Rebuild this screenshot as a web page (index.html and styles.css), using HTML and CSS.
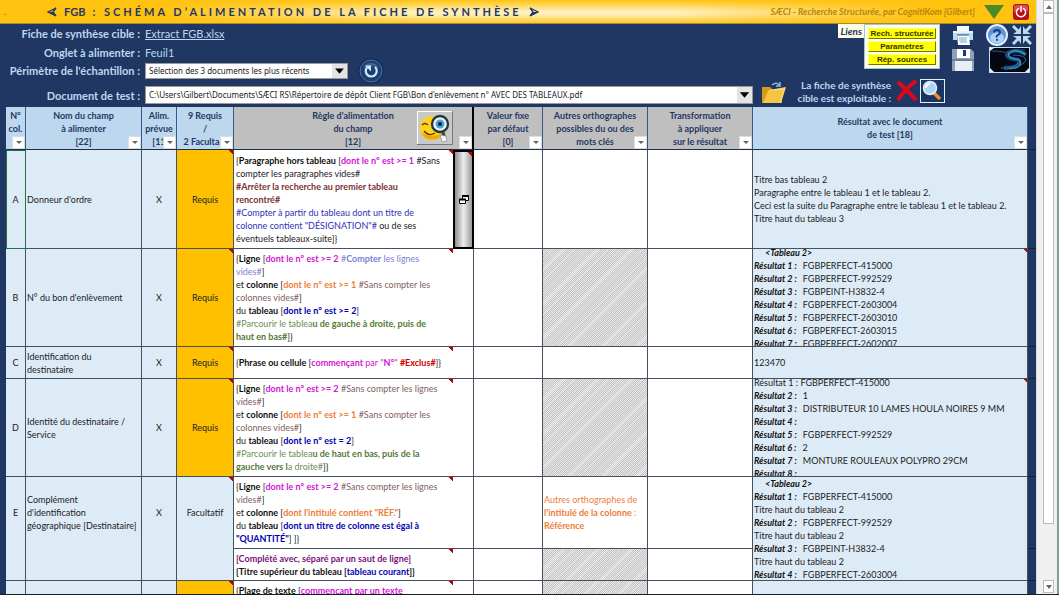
FILE: index.html
```html
<!DOCTYPE html>
<html lang="fr">
<head>
<meta charset="utf-8">
<title>FGB : Schéma d’alimentation de la fiche de synthèse</title>
<link rel="stylesheet" href="styles.css">
</head>
<body>
<div class="window">
<main class="sheet">
  <header class="banner">
    <span class="dot">.</span>
    <h1 class="title">
      <svg class="arrowhead" viewBox="0 0 10 10"><path d="M9 1 1 5l8 4-3-4z" fill="none" stroke="#1f3864" stroke-width="1.3"/><path d="M1 5h5l3 4z" fill="#1f3864"/></svg>
      <span>FGB</span><span class="spaced">: SCHÉMA D’ALIMENTATION DE LA FICHE DE SYNTHÈSE</span>
      <svg class="arrowhead" viewBox="0 0 10 10"><path d="M1 1 9 5 1 9l3-4z" fill="none" stroke="#1f3864" stroke-width="1.3"/><path d="M9 5H4L1 9z" fill="#1f3864"/></svg>
    </h1>
    <span class="credit">SÆCI - Recherche Structurée, par CognitiKom [Gilbert]</span>
    <button class="icon-btn" aria-label="Dérouler"><svg width="20" height="14" viewBox="0 0 20 14"><path d="M0 0h20L10 14z" fill="#4a8a2a"/></svg></button>
    <button class="icon-btn" aria-label="Quitter"><svg width="16" height="16" viewBox="0 0 16 16"><rect width="16" height="16" rx="3" fill="#b80f18"/><path d="M1 8V3q0-2 2-2h10q2 0 2 2v4q-7-2-14 1z" fill="#dc4b50"/><path d="M5.3 4.5a4.6 4.6 0 1 0 5.4 0M8 2.5v5" fill="none" stroke="#fff" stroke-width="1.5" stroke-linecap="round"/></svg></button>
  </header>

  <section class="top">
    <div class="fields">
      <span class="label">Fiche de synthèse cible :</span><a class="value" href="#">Extract FGB.xlsx</a>
      <span class="label">Onglet à alimenter :</span><span class="value">Feuil1</span>
      <label class="label" for="scope">Périmètre de l'échantillon :</label>
      <div class="scope">
        <span class="combo"><select id="scope"><option>Sélection des 3 documents les plus récents</option></select><svg class="combo-arrow" viewBox="0 0 16 16"><path d="M3 5h10l-5 6z"/></svg></span>
        <button class="icon-btn" aria-label="Actualiser"><svg width="26" height="26" viewBox="0 0 26 26"><circle cx="13" cy="13" r="12.5" fill="#12294f"/><circle cx="13" cy="13" r="11" fill="#1d3f73" stroke="#4f74a8"/><path d="M5 10a9 9 0 0 1 16 0q-8-4-16 0z" fill="#41639a"/><path d="M9 9.500a5.500 5.500 0 1 0 8-.5" fill="none" stroke="#d7e9fb" stroke-width="2.2"/><path d="M7 7.500h6v6z" fill="#d7e9fb"/></svg></button>
      </div>
    </div>
    <div class="links">
      <span class="links-title">Liens</span>
      <div class="links-box"><button>Rech. structurée</button><button>Paramètres</button><button>Rép. sources</button></div>
    </div>
    <div class="tools">
      <button class="icon-btn" aria-label="Imprimer"><svg width="22" height="21" viewBox="0 0 22 21"><path d="M5 1h12v5H5z" fill="#f6fbff"/><path d="M1 6h20v9h-4v-4H5v4H1z" fill="#b6dcf2"/><path d="M1 6h20v2H1z" fill="#e6f5fd"/><path d="M5 10h12l1 10H6z" fill="#f8fcff"/><path d="M7 13h8M7 15h8M8 17h7" stroke="#7fa6c4"/><path d="M5 10h12" stroke="#27456e"/></svg></button>
      <button class="icon-btn" aria-label="Aide"><svg width="22" height="22" viewBox="0 0 22 22"><circle cx="11" cy="11" r="10" fill="#5b93dd" stroke="#e8f1fb" stroke-width="2"/><ellipse cx="11" cy="14" rx="7" ry="5.5" fill="#a9d0f6"/><path d="M8 8.5Q8 6 11 6t3 2.500Q14 10 12 11t-1 2.500M11 15v1.800" fill="none" stroke="#1d3e7c" stroke-width="1.900"/></svg></button>
      <button class="icon-btn" aria-label="Réduire"><svg width="20" height="20" viewBox="0 0 20 20"><path d="M1 1l6 6M19 1l-6 6M1 19l6-6M19 19l-6-6" fill="none" stroke="#b9dcf3" stroke-width="3"/><path d="M9 1v8H1l3-2 3-3zM11 1v8h8l-3-2-3-3zM9 19v-8H1l3 2 3 3zM11 19v-8h8l-3 2-3 3z" fill="#b9dcf3"/></svg></button>
      <button class="icon-btn" aria-label="Enregistrer"><svg width="22" height="24" viewBox="0 0 22 24"><path d="M0 1h19l3 3v19H0z" fill="#8fa1ba"/><path d="M5 1h13v9H5z" fill="#fff"/><path d="M11 2h3v6h-3z" fill="#1f3864"/><path d="M0 11h22v2H0z" fill="#6a80a0"/><path d="M3 13h17v10H3z" fill="#e9eef3"/></svg></button>
      <button class="icon-btn logo" aria-label="SÆCI"><svg width="41" height="26" viewBox="0 0 41 26"><rect x=".5" y=".5" width="40" height="25" fill="#04070f" stroke="#c9dcee"/><path d="M1 1h4L1 4zM1 21l4 4H1zM40 21v4h-4z" fill="#e8f2fa"/><path d="M3 4q12 0 18 3 6-5 15-4" fill="none" stroke="#1d5c8f"/><path d="M37 8q-6-5-12-4-7 1-7 4t7 4 5 5-15 4" fill="none" stroke="#164f83" stroke-width="4"/><path d="M36 7q-6-4-12-3-6 2-4 5t7 3 4 5-11 4" fill="none" stroke="#4aa6d8" stroke-width="1.200"/><path d="M12 21q12 1 17-5M24 8q12 0 13 5-3 6-14 8" fill="none" stroke="#1f74ae"/></svg></button>
    </div>
  </section>

  <section class="doc">
    <label class="label" for="doc">Document de test :</label>
    <span class="combo"><select id="doc"><option>C:\Users\Gilbert\Documents\SÆCI RS\Répertoire de dépôt Client FGB\Bon d'enlèvement n° AVEC DES TABLEAUX.pdf</option></select><svg class="combo-arrow" viewBox="0 0 16 16"><path d="M3 5h10l-5 6z"/></svg></span>
    <button class="icon-btn" aria-label="Ouvrir"><svg width="28" height="26" viewBox="0 0 28 26"><path d="M2 8h8l2 2h10v14H2z" fill="#d49a1c"/><path d="M4 24 9 11l17-3-5 16z" fill="#fbd766"/><path d="M3 24 8 12l15-1-4 13z" fill="#f5c443"/><path d="M12 6q5-4 8 1m0-4v4h-4" fill="none" stroke="#8db4d8" stroke-width="1.500"/></svg></button>
    <p class="status">La fiche de synthèse<br>cible est exploitable :</p>
    <svg class="cross" width="22" height="22" viewBox="0 0 22 22"><path d="M2 2q9 8 18 18M20 1Q9 9 2 20" fill="none" stroke="#e3061a" stroke-width="4"/></svg>
    <button class="icon-btn" aria-label="Rechercher"><svg width="25" height="24" viewBox="0 0 25 24"><rect x=".5" y=".5" width="24" height="23" fill="#1b3563" stroke="#e6eef6"/><path d="m14 14 6 6" stroke="#f08a2c" stroke-width="3.500"/><circle cx="10" cy="9" r="6.500" fill="#a9d3f3" stroke="#e4f0fa" stroke-width="1.500"/><path d="M6 9q0-4 4-4" fill="none" stroke="#fff" stroke-width="2"/></svg></button>
  </section>

  <div class="grid-area">
  <table class="grid">
    <colgroup><col class="c-num"><col class="c-name"><col class="c-alim"><col class="c-req"><col class="c-rule"><col class="c-open"><col class="c-val"><col class="c-alt"><col class="c-alt"><col><col class="c-edge"></colgroup>
    <thead>
      <tr>
        <th>N°<br>col.<br>&nbsp;<button class="filter" aria-label="Filtrer"></button></th>
        <th>Nom du champ<br>à alimenter<br>[22]<button class="filter" aria-label="Filtrer"></button></th>
        <th>Alim.<br>prévue<br>[11<button class="filter" aria-label="Filtrer"></button></th>
        <th>9 Requis<br>/<br><span class="cut">2 Faculta</span><button class="filter" aria-label="Filtrer"></button></th>
        <th class="grey rule-head" colspan="2">Règle d'alimentation<br>du champ<br>[12]
          <button class="icon-btn smiley" aria-label="Examiner"><svg width="36" height="34" viewBox="0 0 36 34"><path d="M0 0h36v34H0z" fill="#c9c9c9"/><path d="M0 34V0h36" fill="none" stroke="#fff" stroke-width="2"/><path d="M0 33.500h35.500V0" fill="none" stroke="#777"/><circle cx="15" cy="17" r="12" fill="#ffd21c"/><path d="M4 21a12 12 0 0 0 22 1q-11 6-22-1z" fill="#f0a90c"/><path d="M5 14q3-3 6 0M7 20q5 6 11 2" fill="none" stroke="#5a3a05" stroke-width="1.300"/><circle cx="23" cy="13" r="8" fill="#e9f6fd" stroke="#26343f" stroke-width="2.300"/><circle cx="23" cy="13" r="4.500" fill="#4aa3d8"/><circle cx="23" cy="13" r="2" fill="#0b1d2c"/><path d="m26 21 2 7" stroke="#444" stroke-width="3"/><path d="m23 24 6 1 1 5-5 1z" fill="#f5f5f5" stroke="#888" stroke-width=".7"/></svg></button>
          <button class="filter" aria-label="Filtrer"></button></th>
        <th class="grey">Valeur fixe<br>par défaut<br>[0]<button class="filter" aria-label="Filtrer"></button></th>
        <th class="grey">Autres orthographes<br>possibles du ou des<br>mots clés<button class="filter" aria-label="Filtrer"></button></th>
        <th class="grey">Transformation<br>à appliquer<br>sur le résultat<button class="filter" aria-label="Filtrer"></button></th>
        <th>Résultat avec le document<br>de test [18]<button class="filter" aria-label="Filtrer"></button></th>
        <td class="edge"></td>
      </tr>
    </thead>
    <tbody>
      <tr class="tall first">
        <td class="blue mid selected">A</td><td class="blue">Donneur d'ordre</td><td class="blue mid">X</td><td class="req note">Requis</td>
        <td class="rule note">{<b>Paragraphe hors tableau</b> [<b class="pink">dont le n° est &gt;= 1</b> #Sans<br>compter les paragraphes vides#<br><b class="maroon">#Arrêter la recherche au premier tableau<br>rencontré#</b><br><span class="indigo">#Compter à partir du tableau dont un titre de<br>colonne contient "DÉSIGNATION"#</span> ou de ses<br>éventuels tableaux-suite]}</td>
        <td class="opener note"><button class="icon-btn" aria-label="Ouvrir la règle"><svg width="10" height="10" viewBox="0 0 10 10"><path d="M3.500.5h6v5h-6z" fill="#fff" stroke="#000"/><path d="M3 1h7" stroke="#000" stroke-width="2"/><path d="M.5 4.500h6v4h-6z" fill="#fff" stroke="#000"/><path d="M0 4.500h7" stroke="#000" stroke-width="2"/></svg></button></td>
        <td></td><td></td><td></td>
        <td class="blue">Titre bas tableau 2<br>Paragraphe entre le tableau 1 et le tableau 2.<br>Ceci est la suite du Paragraphe entre le tableau 1 et le tableau 2.<br>Titre haut du tableau 3</td><td class="edge"></td>
      </tr>
      <tr class="tall">
        <td class="blue mid">B</td><td class="blue">N° du bon d'enlèvement</td><td class="blue mid">X</td><td class="req note">Requis</td>
        <td class="rule note">{<b>Ligne</b> [<b class="pink">dont le n° est &gt;= 2</b> <span class="lilac">#<b>Compter</b> les lignes<br>vides#</span>]<br>et <b>colonne</b> [<b class="orange">dont le n° est &gt;= 1</b> <span class="brown">#Sans compter les<br>colonnes vides#</span>]<br>du <b>tableau</b> [<b class="navy">dont le n° est &gt;= 2</b>]<br><span class="green">#Parcourir le tablea<b>u de gauche à droite, puis de<br>haut en bas#</b></span>]}</td>
        <td></td><td></td><td class="hatch"></td><td></td>
        <td class="blue note"><div class="results"><p class="sub">&lt;Tableau 2&gt;</p><p><i>Résultat 1 :</i>FGBPERFECT-415000</p><p><i>Résultat 2 :</i>FGBPERFECT-992529</p><p><i>Résultat 3 :</i>FGBPEINT-H3832-4</p><p><i>Résultat 4 :</i>FGBPERFECT-2603004</p><p><i>Résultat 5 :</i>FGBPERFECT-2603010</p><p><i>Résultat 6 :</i>FGBPERFECT-2603015</p><p><i>Résultat 7 :</i>FGBPERFECT-2602007</p></div></td><td class="edge"></td>
      </tr>
      <tr class="short">
        <td class="blue mid">C</td><td class="blue">Identification du<br>destinataire</td><td class="blue mid">X</td><td class="req note">Requis</td>
        <td class="rule note">{<b>Phrase ou cellule</b> [<span class="pink"><b>commençant</b> par "<b>N°</b>"</span> <b class="red">#Exclus#</b>]}</td>
        <td></td><td></td><td></td><td></td><td class="blue">123470</td><td class="edge"></td>
      </tr>
      <tr class="tall">
        <td class="blue mid">D</td><td class="blue">Identité du destinataire /<br>Service</td><td class="blue mid">X</td><td class="req note">Requis</td>
        <td class="rule note">{<b>Ligne</b> [<b class="pink">dont le n° est &gt;= 2</b> <span class="brown">#Sans compter les lignes<br>vides#</span>]<br>et <b>colonne</b> [<b class="orange">dont le n° est &gt;= 1</b> <span class="brown">#Sans compter les<br>colonnes vides#</span>]<br>du <b>tableau</b> [<b class="navy">dont le n° est = 2</b>]<br><span class="green">#Parcourir le tablea<b>u de haut en bas, puis de la<br>gauche vers l</b>a droite#</span>]}</td>
        <td></td><td></td><td class="hatch"></td><td></td>
        <td class="blue note"><div class="results"><p>Résultat 1 : FGBPERFECT-415000</p><p><i>Résultat 2 :</i>1</p><p><i>Résultat 3 :</i>DISTRIBUTEUR 10 LAMES HOULA NOIRES 9 MM</p><p><i>Résultat 4 :</i></p><p><i>Résultat 5 :</i>FGBPERFECT-992529</p><p><i>Résultat 6 :</i>2</p><p><i>Résultat 7 :</i>MONTURE ROULEAUX POLYPRO 29CM</p><p><i>Résultat 8 :</i></p></div></td><td class="edge"></td>
      </tr>
      <tr class="medium">
        <td class="blue mid span" rowspan="2">E</td><td class="blue span" rowspan="2">Complément<br>d'identification<br>géographique [Destinataire]</td><td class="blue mid span" rowspan="2">X</td><td class="blue mid note span" rowspan="2">Facultatif</td>
        <td class="rule note">{<b>Ligne</b> [<b class="pink">dont le n° est &gt;= 2</b> <span class="brown">#Sans compter les lignes<br>vides#</span>]<br>et <b>colonne</b> [<b class="orange">dont l'intitulé contient "RÉF."</b>]<br>du <b>tableau</b> [<b class="navy">dont un titre de colonne est égal à<br>"QUANTITÉ"</b>] ]}</td>
        <td></td><td></td><td class="orange">Autres orthographes de<br><b>l'intitulé de la colonne</b> :<br><b>Référence</b></td><td></td>
        <td class="blue" rowspan="2"><div class="results"><p class="sub">&lt;Tableau 2&gt;</p><p><i>Résultat 1 :</i>FGBPERFECT-415000</p><p>Titre haut du tableau 2</p><p><i>Résultat 2 :</i>FGBPERFECT-992529</p><p>Titre haut du tableau 2</p><p><i>Résultat 3 :</i>FGBPEINT-H3832-4</p><p>Titre haut du tableau 2</p><p><i>Résultat 4 :</i>FGBPERFECT-2603004</p></div></td><td class="edge"></td>
      </tr>
      <tr class="short">
        <td class="rule note"><b class="purple">[Complété avec, séparé par un saut de ligne]</b><br><b>{Titre supérieur du tableau [<span class="navy">tableau courant</span>]}</b></td>
        <td></td><td></td><td class="hatch"></td><td></td><td class="edge"></td>
      </tr>
      <tr class="tall last">
        <td class="blue"></td><td class="blue"></td><td class="blue"></td><td class="req note"></td>
        <td class="rule note">{<b>Plage de texte</b> [<b class="pink">commençant par un texte</b></td>
        <td></td><td></td><td class="hatch"></td><td></td><td class="blue"></td><td class="edge"></td>
      </tr>
    </tbody>
  </table>
  </div>
</main>
<aside class="scroll">
  <button aria-label="Défiler vers le haut"><svg width="6" height="4" viewBox="0 0 6 4"><path d="M3 0l3 4H0z" fill="#666"/></svg></button>
  <div class="thumb"></div>
  <div class="track"></div>
  <button aria-label="Défiler vers le bas"><svg width="6" height="4" viewBox="0 0 6 4"><path d="M0 0h6L3 4z" fill="#666"/></svg></button>
</aside>
</div>
</body>
</html>
```
FILE: styles.css
```css
* { box-sizing: border-box; }
body { margin: 0; font: 9px/13px Lato, "Liberation Sans", sans-serif; color: #222; background: #fff; }
p, h1 { margin: 0; }
button, select { font: inherit; }
.window { display: flex; height: 100vh; border-bottom: 1px solid #10241d; overflow: hidden; }
.sheet { flex: 1; min-width: 0; display: flex; flex-direction: column; background: #203764; }
.icon-btn { flex: none; display: block; padding: 0; border: 0; background: none; line-height: 0; }
.icon-btn svg, .cross { display: block; }

.banner { flex: none; display: flex; align-items: center; gap: 9px; height: 24px; padding: 0 7px 0 4px; border-bottom: 1px solid #a58a3a;
  background: linear-gradient(90deg, #ffc20e 0, #ffc20e 15%, transparent 40%, transparent 65%, #ffc20e 90%), linear-gradient(#ffc20e, #fff0bd 50%, #fff0bd 60%, #ffc928); }
.dot { width: 34px; color: #a33; }
.title { display: flex; align-items: center; gap: 7px; font-size: 11px; line-height: 16px; color: #1f3864; white-space: nowrap; }
.spaced { letter-spacing: 3px; }
.arrowhead { width: 10px; height: 10px; }
.credit { margin-left: auto; font-size: 9px; font-weight: bold; font-style: italic; color: #b8860b; white-space: nowrap; }

.top { flex: none; display: flex; align-items: flex-start; height: 55px; padding-right: 4px; color: #bdd7ee; }
.fields { flex: 1; display: grid; grid-template-columns: 140px 1fr; grid-template-rows: 20px 18px 18px; column-gap: 5px; align-items: center; font-size: 11px; line-height: 16px; }
.label { text-align: right; font-size: 11px; font-weight: bold; color: #bdd7ee; white-space: nowrap; }
.value { justify-self: start; color: #bdd7ee; }
.scope { display: flex; align-items: center; gap: 10px; height: 18px; }
.scope .combo { width: 203px; }
.combo { position: relative; display: block; height: 16px; }
.combo select { display: block; width: 100%; height: 100%; padding: 0 20px 0 3px; border: 1px solid #999; border-radius: 0; appearance: none; background: #fff; color: #222; font: 8px/14px "Noto Sans", sans-serif; }
.combo-arrow { position: absolute; top: 1px; right: 1px; width: 15px; height: calc(100% - 2px); background: #e4e4e4; pointer-events: none; }
.links { display: flex; align-items: flex-start; }
.links-title { padding: 1px 2px 0; background: #ffffe8; color: #1f3864; font-size: 10px; font-weight: bold; font-style: italic; }
.links-box { display: flex; flex-direction: column; width: 76px; padding: 3px; gap: 2px; background: #ffffe8; border: 1px solid #9fc5d8; }
.links-box button { height: 11px; padding: 0; border: 1px solid; border-color: #ffff80 #777700 #777700 #ffff80; background: #ffff00; color: #333300; font: bold 8px/9px "Liberation Sans", sans-serif; white-space: nowrap; }
.tools { display: grid; grid-template-columns: 30px 22px 20px; gap: 1px 4px; margin-left: 12px; justify-items: start; }
.tools .logo { grid-column: 2 / 4; justify-self: center; }

.doc { flex: none; display: flex; align-items: flex-start; height: 28px; padding-right: 91px; }
.doc .label { width: 140px; margin-right: 5px; line-height: 34px; }
.doc .combo { flex: 1; height: 18px; margin: 7px 7px 0 0; }
.doc .status { width: 103px; margin-right: 5px; text-align: right; color: #bdd7ee; font-size: 10px; font-weight: bold; white-space: nowrap; }
.cross { flex: none; margin: 1px 2px 0 0; }

.grid-area { flex: 1; min-height: 0; overflow: hidden; padding-left: 6px; }
.grid { width: 100%; table-layout: fixed; border-collapse: separate; border-spacing: 0; background: #fff; }
.c-num { width: 20px; } .c-name { width: 116px; } .c-alim { width: 35px; } .c-req { width: 57px; }
.c-rule { width: 219px; } .c-open { width: 21px; } .c-val { width: 69px; } .c-alt { width: 105px; } .c-edge { width: 8px; }
.grid th, .grid td { position: relative; padding: 0 1px; border: solid #45505e; border-width: 0 1px 1px 0; white-space: nowrap; text-align: left; }
.grid th { height: 43px; padding: 0; background: #bdd7ee; color: #1f3864; border-color: #38578a; border-bottom-color: #1f2f4a; text-align: center; }
.grid th.grey { background: #bfbfbf; }
.grid th.rule-head { border-right: 2px solid #000; }
.cut { display: block; width: 43px; margin-left: 3px; }
.smiley { position: absolute; right: 19px; top: 4px; }
.filter { position: absolute; right: 0; bottom: 0; width: 13px; height: 13px; padding: 0; border: 1px solid #ddd; background: #fff; }
.filter::after { content: ""; position: absolute; left: 3px; top: 4px; border: solid transparent; border-width: 3px 3px 0; border-top-color: #666; }
.tall td { height: 98px; }
.first td { height: 99px; }
.medium td { height: 72px; }
.short td { height: 32px; }
.grid .span { padding-bottom: 32px; }
.grid .last td { vertical-align: top; padding-top: 3px; }
.grid .blue { background: #ddebf7; }
.grid .req { background: #ffc000; }
.grid .mid, .grid .req { text-align: center; }
.grid .rule { padding-left: 2px; border-right: 0; }
.grid .hatch { background: repeating-linear-gradient(135deg, transparent 0 6px, #dedede 6px 8px), repeating-conic-gradient(#c0c0c0 0 25%, #ececec 0 50%) 0 0 / 2px 2px; }
.grid .edge { background: #203764; border-right: 0; border-bottom-color: #141f38; padding: 0; }
.grid .selected { outline: 1px solid #217346; outline-offset: -1px; }
.grid .opener { border: 2px solid #000; background: linear-gradient(90deg, #909090, #ececec 50%, #999); padding: 0; }
.opener .icon-btn { margin: 0 auto; }
.note::after { content: ""; position: absolute; top: 0; right: 0; width: 4px; height: 4px; background: linear-gradient(45deg, transparent 50%, #c00000 50%); }
.results { display: flex; flex-direction: column; justify-content: center; height: 97px; overflow: hidden; }
td[rowspan] .results { height: 103px; }
.results p { flex: none; height: 13px; }
.results .sub { padding-left: 11px; font-weight: bold; font-style: italic; color: #111; }
.results i { font-weight: bold; color: #111; margin-right: 6px; }
b { color: #111; }
.pink, .pink b { color: #d412d4; }
.maroon { color: #7b3434; }
.indigo { color: #3030b8; }
.lilac, .lilac b { color: #8080d8; }
.orange, .orange b { color: #ed7d3a; }
.brown { color: #856060; }
.navy { color: #0000b4; }
.green { color: #6b8f55; }
.green b { color: #527a35; }
.red { color: #d00000; }
.purple { color: #7b107b; }

.scroll { flex: none; display: flex; flex-direction: column; width: 23px; padding: 0 3px 1px 6px; border-left: 1px solid #d8d8d8; border-right: 2px solid #7fa08e; background: #f0f0f0; }
.scroll button { flex: none; display: grid; place-items: center; height: 13px; padding: 0; border: 1px solid #bbb; background: #fff; }
.thumb { flex: 509; border: 1px solid #bbb; background: #fff; }
.track { flex: 56; }
```
